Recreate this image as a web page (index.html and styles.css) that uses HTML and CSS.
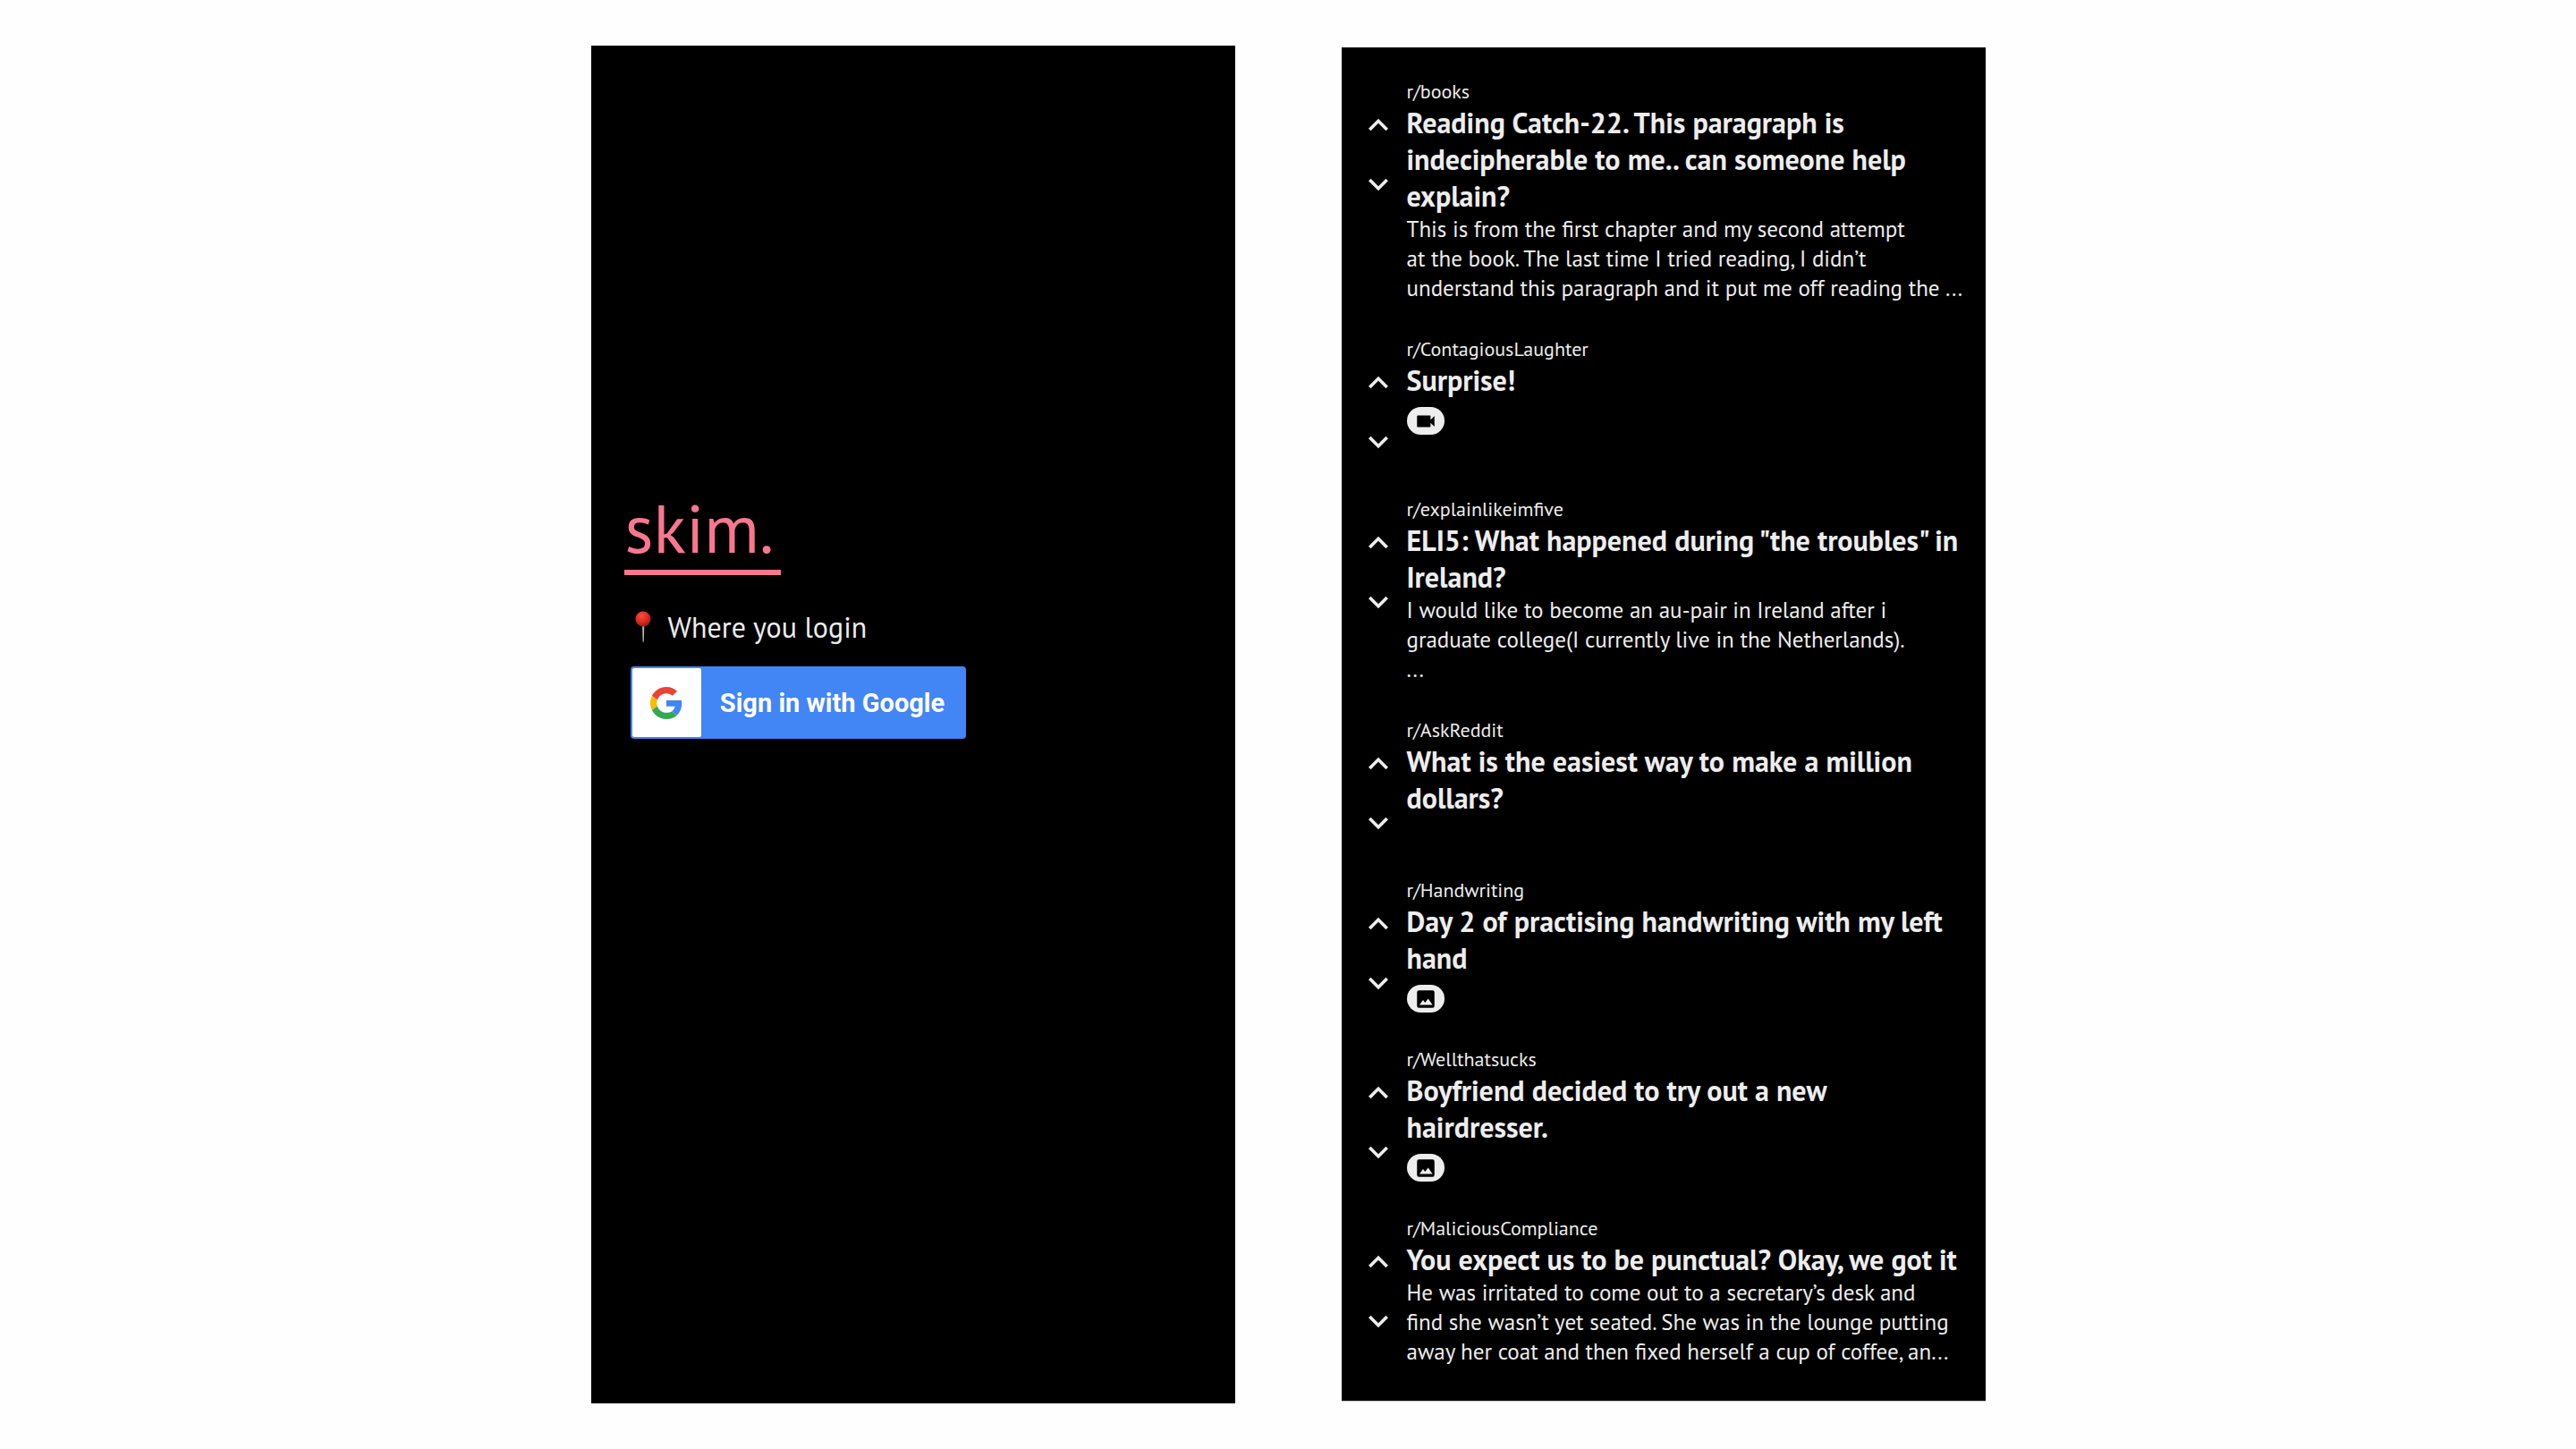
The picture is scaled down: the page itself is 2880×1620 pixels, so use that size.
FILE: index.html
```html
<!DOCTYPE html>
<html lang="en">
<head>
<meta charset="utf-8">
<meta name="viewport" content="width=device-width, initial-scale=1">
<title>skim.</title>
<link rel="stylesheet" href="styles.css">
</head>
<body>
<svg class="sprite" aria-hidden="true">
  <symbol id="up" viewBox="0 0 24 24"><path d="M7.41 15.41L12 10.83l4.59 4.58L18 14l-6-6-6 6z"/></symbol>
  <symbol id="down" viewBox="0 0 24 24"><path d="M7.41 8.59L12 13.17l4.59-4.58L18 10l-6 6-6-6z"/></symbol>
  <symbol id="video" viewBox="0 0 24 24"><path d="M17 10.500V7c0-.55-.45-1-1-1H4c-.55 0-1 .45-1 1v10c0 .55.45 1 1 1h12c.55 0 1-.45 1-1v-3.500l4 4v-11l-4 4z"/></symbol>
  <symbol id="image" viewBox="0 0 24 24"><path fill-rule="evenodd" d="M5 3h14a2 2 0 0 1 2 2v14a2 2 0 0 1-2 2H5a2 2 0 0 1-2-2V5a2 2 0 0 1 2-2zM5.500 18h13.500l-4.500-6.500-3.200 4.200L9.200 13z"/></symbol>
</svg>
<main class="screens">
  <section class="screen login">
    <h1 class="wordmark">skim.</h1>
    <p class="where">
      <svg class="pin" viewBox="0 0 18 36" aria-hidden="true">
        <defs>
          <radialGradient id="ball" cx="0.4" cy="0.3" r="0.7"><stop offset="0" stop-color="#ff4a3a"/><stop offset="0.6" stop-color="#d92c20"/><stop offset="1" stop-color="#a81810"/></radialGradient>
        </defs>
        <path d="M8 14h2.400l-.6 20-.6 1.500-.6-1.500z" fill="#b4b4b4"/>
        <circle cx="9" cy="9" r="8.500" fill="url(#ball)"/>
      </svg>
      Where you login
    </p>
    <button class="google" type="button">
      <span class="google-logo">
        <svg viewBox="0 0 48 48" aria-hidden="true">
          <path fill="#EA4335" d="M24 9.500c3.540 0 6.710 1.220 9.210 3.600l6.850-6.850C35.900 2.380 30.470 0 24 0 14.620 0 6.510 5.380 2.560 13.220l7.980 6.190C12.430 13.720 17.740 9.500 24 9.500z"/>
          <path fill="#4285F4" d="M46.980 24.550c0-1.570-.15-3.090-.38-4.550H24v9.020h12.940c-.58 2.960-2.260 5.480-4.780 7.180l7.730 6c4.510-4.180 7.090-10.360 7.090-17.650z"/>
          <path fill="#FBBC05" d="M10.530 28.590c-.48-1.450-.76-2.990-.76-4.590s.27-3.140.76-4.590l-7.980-6.190C.92 16.460 0 20.120 0 24c0 3.880.92 7.540 2.560 10.780l7.970-6.190z"/>
          <path fill="#34A853" d="M24 48c6.480 0 11.930-2.130 15.890-5.810l-7.730-6c-2.150 1.450-4.920 2.300-8.160 2.300-6.260 0-11.570-4.220-13.470-9.910l-7.980 6.190C6.510 42.620 14.620 48 24 48z"/>
        </svg>
      </span>
      <span class="google-label">Sign in with Google</span>
    </button>
  </section>

  <section class="screen feed">
    <article class="post">
      <div class="votes">
        <button class="vote" type="button" aria-label="Upvote"><svg><use href="#up"/></svg></button>
        <button class="vote" type="button" aria-label="Downvote"><svg><use href="#down"/></svg></button>
      </div>
      <div class="content">
        <p class="sub">r/books</p>
        <h2 class="title">Reading Catch-22. This paragraph is<br>indecipherable to me.. can someone help<br>explain?</h2>
        <p class="body">This is from the first chapter and my second attempt<br>at the book. The last time I tried reading, I didn’t<br>understand this paragraph and it put me off reading the ...</p>
      </div>
    </article>
    <article class="post">
      <div class="votes">
        <button class="vote" type="button" aria-label="Upvote"><svg><use href="#up"/></svg></button>
        <button class="vote" type="button" aria-label="Downvote"><svg><use href="#down"/></svg></button>
      </div>
      <div class="content">
        <p class="sub">r/ContagiousLaughter</p>
        <h2 class="title">Surprise!</h2>
        <span class="media"><svg><use href="#video"/></svg></span>
      </div>
    </article>
    <article class="post">
      <div class="votes">
        <button class="vote" type="button" aria-label="Upvote"><svg><use href="#up"/></svg></button>
        <button class="vote" type="button" aria-label="Downvote"><svg><use href="#down"/></svg></button>
      </div>
      <div class="content">
        <p class="sub">r/explainlikeimfive</p>
        <h2 class="title">ELI5: What happened during "the troubles" in<br>Ireland?</h2>
        <p class="body">I would like to become an au-pair in Ireland after i<br>graduate college(I currently live in the Netherlands).<br>...</p>
      </div>
    </article>
    <article class="post">
      <div class="votes">
        <button class="vote" type="button" aria-label="Upvote"><svg><use href="#up"/></svg></button>
        <button class="vote" type="button" aria-label="Downvote"><svg><use href="#down"/></svg></button>
      </div>
      <div class="content">
        <p class="sub">r/AskReddit</p>
        <h2 class="title">What is the easiest way to make a million<br>dollars?</h2>
      </div>
    </article>
    <article class="post">
      <div class="votes">
        <button class="vote" type="button" aria-label="Upvote"><svg><use href="#up"/></svg></button>
        <button class="vote" type="button" aria-label="Downvote"><svg><use href="#down"/></svg></button>
      </div>
      <div class="content">
        <p class="sub">r/Handwriting</p>
        <h2 class="title">Day 2 of practising handwriting with my left<br>hand</h2>
        <span class="media"><svg><use href="#image"/></svg></span>
      </div>
    </article>
    <article class="post">
      <div class="votes">
        <button class="vote" type="button" aria-label="Upvote"><svg><use href="#up"/></svg></button>
        <button class="vote" type="button" aria-label="Downvote"><svg><use href="#down"/></svg></button>
      </div>
      <div class="content">
        <p class="sub">r/Wellthatsucks</p>
        <h2 class="title">Boyfriend decided to try out a new<br>hairdresser.</h2>
        <span class="media"><svg><use href="#image"/></svg></span>
      </div>
    </article>
    <article class="post">
      <div class="votes">
        <button class="vote" type="button" aria-label="Upvote"><svg><use href="#up"/></svg></button>
        <button class="vote" type="button" aria-label="Downvote"><svg><use href="#down"/></svg></button>
      </div>
      <div class="content">
        <p class="sub">r/MaliciousCompliance</p>
        <h2 class="title">You expect us to be punctual? Okay, we got it</h2>
        <p class="body">He was irritated to come out to a secretary’s desk and<br>find she wasn’t yet seated. She was in the lounge putting<br>away her coat and then fixed herself a cup of coffee, an...</p>
      </div>
    </article>
  </section>
</main>
</body>
</html>
```
FILE: styles.css
```css
* {
  box-sizing: border-box;
}

body {
  margin: 0;
  background: #fefefe;
  color: #ededed;
  font-family: "PT Sans", "Noto Sans", sans-serif;
}

h1, h2, p {
  margin: 0;
  font-weight: 400;
}

button {
  padding: 0;
  border: 0;
  background: none;
  color: inherit;
  cursor: pointer;
}

.sprite {
  display: none;
}

.screens {
  display: flex;
  justify-content: center;
  align-items: center;
  gap: 119px;
  min-height: 100vh;
}

.screen {
  width: 25vw;
  min-width: 720px;
  background: #000;
}

/* Login screen */
.login {
  aspect-ratio: 720 / 1518;
  display: flex;
  flex-direction: column;
  align-items: flex-start;
  padding: 494px 37px 0;
}

.wordmark {
  padding: 0 8px 2px 1px;
  border-bottom: 6px solid #f8778f;
  color: #f8778f;
  font-size: 76px;
  line-height: 90px;
}

.where {
  display: flex;
  align-items: center;
  gap: 19px;
  margin: 38px 0 24px 12px;
  font-size: 32px;
  line-height: 40px;
}

.pin {
  width: 18px;
  height: 36px;
}

.google {
  display: flex;
  align-items: center;
  width: 375px;
  height: 81px;
  margin-left: 7px;
  padding: 2px;
  border-radius: 4px;
  background: #4285f4;
  color: #fff;
}

.google-logo {
  display: grid;
  place-items: center;
  width: 77px;
  height: 77px;
  border-radius: 2px;
  background: #fff;
}

.google-logo svg {
  width: 36px;
  height: 36px;
}

.google-label {
  flex: 1;
  font-family: Roboto, sans-serif;
  font-size: 29px;
  font-weight: 700;
  line-height: 40px;
}

/* Feed screen */
.feed {
  display: flex;
  flex-direction: column;
  gap: 37px;
  padding: 35px 17px 38px;
  border-bottom: 1px solid #c4c4c4;
}

.post {
  display: flex;
  gap: 8px;
}

.votes {
  display: flex;
  flex-direction: column;
  gap: 18px;
  padding-top: 28px;
}

.vote {
  display: grid;
  place-items: center;
  width: 48px;
  height: 48px;
}

.vote svg {
  width: 44px;
  height: 44px;
  fill: #ededed;
}

.content {
  flex: 1;
  min-width: 0;
  white-space: nowrap;
}

.sub {
  font-size: 22px;
  line-height: 29px;
}

.title {
  font-size: 32px;
  font-weight: 700;
  line-height: 41px;
}

.body {
  font-size: 25px;
  line-height: 33px;
}

.media {
  display: grid;
  place-items: center;
  width: 42px;
  height: 31px;
  margin-top: 9px;
  margin-bottom: 1px;
  border-radius: 16px;
  background: #ededed;
}

.media svg {
  width: 26px;
  height: 26px;
  fill: #000;
}
```
